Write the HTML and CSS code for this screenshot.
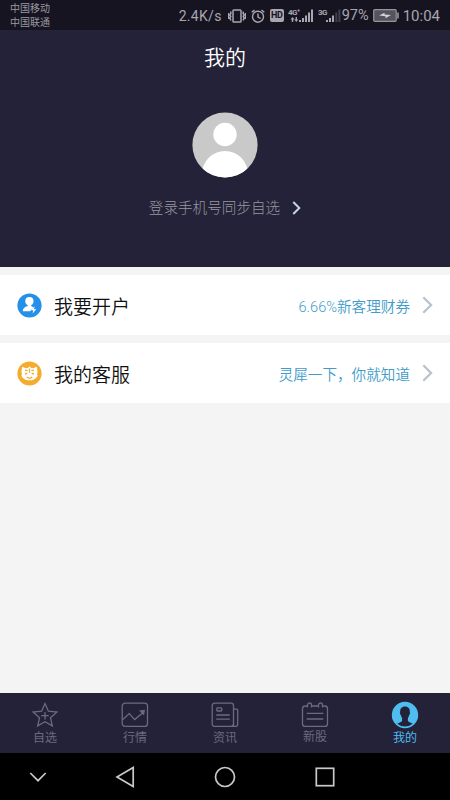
FILE: index.html
```html
<!DOCTYPE html>
<html lang="zh-CN">
<head>
<meta charset="utf-8">
<title>我的</title>
<link rel="stylesheet" href="styles.css">
</head>
<body>
<div class="screen">
  <div class="status">
    <div class="carriers"><span>中国移动</span><span>中国联通</span></div>
    <div class="indicators">
      <span class="speed">2.4K/s</span>
      <svg class="vibrate" width="18" height="14" viewBox="0 0 18 14" fill="none" stroke="currentColor" stroke-width="1.5"><rect x="5" y="1" width="8" height="12" rx=".8"/><path d="M2.8 2.5v2L2 6l.8 1.5L2 9l.8 2.5M.6 4v6M15.2 2.5v2L16 6l-.8 1.5L16 9l-.8 2.5M17.4 4v6"/></svg>
      <svg class="alarm" width="14" height="14" viewBox="0 0 14 14" fill="none" stroke="currentColor" stroke-width="1.4"><circle cx="7" cy="7.7" r="5.5"/><path d="M7 4.5v3.5l2.6 1.5M.7 3.3 3.5 1M13.3 3.3 10.5 1"/></svg>
      <span class="hd">HD</span>
      <svg class="signal-a" width="26" height="16" viewBox="0 0 26 16" fill="currentColor"><text x="0" y="7">4G⁺</text><path d="M4.5 9 6.5 11.5H5.2V14H3.8V11.5H2.5ZM8.3 14 6.3 11.5h1.3V9H9v2.5h1.3ZM11 12h2v2h-2zM14 10h2v4h-2zM17 7.5h2V14h-2zM20 4.5h2V14h-2zM23 1.5h2V14h-2z"/></svg>
      <svg class="signal-b" width="23" height="16" viewBox="0 0 23 16" fill="currentColor"><text x="0" y="7">3G</text><path d="M8 12h2v2H8zM11 10h2v4h-2zM14 7.5h2V14h-2z"/><path opacity=".3" d="M17.3 4.5h2V14h-2zM20.4 1.5h2V14h-2z"/></svg>
      <span class="percent">97%</span>
      <svg class="battery" width="26" height="13" viewBox="0 0 26 13"><rect x=".7" y=".7" width="22.5" height="11.6" rx="1" fill="#55535e" stroke="#96949c" stroke-width="1.2"/><path d="M24.3 3.5h1.4v6h-1.4z" fill="#aaa8af"/><path d="m6 6.5 5.5-2.7v1.8L18 6l-5.5 3.3V7.3Z" fill="#d4d2d8"/></svg>
      <span class="clock">10:04</span>
    </div>
  </div>

  <header class="profile">
    <h1>我的</h1>
    <svg class="avatar" width="66" height="66" viewBox="0 0 66 66"><defs><clipPath id="disc"><circle cx="33" cy="33" r="32.6"/></clipPath></defs><g clip-path="url(#disc)"><path fill="#c9c9c9" d="M0 0h66v66H0z"/><circle cx="33" cy="22.5" r="11.7" fill="#fff"/><ellipse cx="33" cy="62" rx="23" ry="23" fill="#fff"/></g></svg>
    <div class="login"><span>登录手机号同步自选</span><svg width="9" height="14" viewBox="0 0 9 14" fill="none" stroke="#c6d3e6" stroke-width="2"><path d="m1.3 1 6 6-6 6"/></svg></div>
  </header>

  <main>
    <a class="row">
      <svg width="25" height="25" viewBox="0 0 25 25"><circle cx="12.5" cy="12.5" r="12.1" fill="#2490ea"/><circle cx="12.4" cy="8.2" r="4.1" fill="#fff"/><path fill="#fff" d="M10.7 11h3.5v2l2.4 1.4-3.5 3.9H5.8c0-2.9 1.7-4.1 4.9-5.200Z"/><path fill="#fff" d="m17.700 13.300-3.700 4h2.200l-.6 3.200 3.700-4.200H17Z"/></svg>
      <span class="label">我要开户</span><span class="hint">6.66%新客理财券</span>
      <svg class="chevron" width="11" height="18" viewBox="0 0 11 18"><path d="m1.3 1.3 7.8 7.7-7.8 7.7"/></svg>
    </a>
    <a class="row">
      <svg width="25" height="25" viewBox="0 0 25 25"><circle cx="12.5" cy="12.5" r="12.1" fill="#f3ac2e"/><path fill="#fff" d="M5.200 5.700 9 7.200l2.200-.5 1.300-1.400 1.300 1.400 2.200.5 3.800-1.500.8 5.300-.6 2.200.7 1.500-1.400 2c-1.400 1.600-3.800 2.600-6.800 2.600s-5.400-1-6.800-2.600l-1.400-2 .7-1.500-.6-2.200Z"/><g fill="none" stroke="#f3ac2e" stroke-width="1.2"><path d="M8 9.300h2.600M14.400 9.300H17M12.500 7.500v4.200M8.800 13.800v-1.500h1.500M16.200 13.800v-1.500h-1.500M9.800 16c1.600 1.500 3.800 1.500 5.400 0"/></g></svg>
      <span class="label">我的客服</span><span class="hint">灵犀一下，你就知道</span>
      <svg class="chevron" width="11" height="18" viewBox="0 0 11 18"><path d="m1.3 1.3 7.8 7.7-7.8 7.7"/></svg>
    </a>
  </main>

  <nav class="tabs">
    <a><svg width="28" height="28" viewBox="0 0 28 28"><path d="m14 2.500 3.400 7.700 8.500.8-6.400 5.700 1.800 8.200-7.300-4.200-7.300 4.200 1.800-8.200L2.100 11l8.500-.8ZM14 11v7.500M10.300 14.700h7.400"/></svg><span>自选</span></a>
    <a><svg width="28" height="28" viewBox="0 0 28 28"><rect x="1.2" y="2.1" width="25.3" height="23.3" rx="3"/><path d="m1.500 18.800 6.800-6.200 5.400 6 9-7.600"/><path class="solid" d="m18 9.500 6-.8-1 5.800Z"/></svg><span>行情</span></a>
    <a><svg width="28" height="28" viewBox="0 0 28 28"><rect x="1.2" y="2.1" width="21.3" height="23.3" rx="2.5"/><path d="M22.500 8.200h3.200q1 0 1 1v13.700q0 2.500-2.500 2.500h-4q2.300 0 2.300-2.500M5.200 14h13.600M5.200 18.100h13.600"/><rect x="5.8" y="6.8" width="5" height="3.2" rx=".8"/></svg><span>资讯</span></a>
    <a class="stocks"><svg width="28" height="28" viewBox="0 0 28 28"><path d="M6.500 5H4.200q-2.700 0-2.700 2.700v15q0 2.700 2.700 2.700h19.600q2.700 0 2.700-2.700v-15Q26.500 5 23.800 5h-2.300M10.500 5h7M6.500 6.500V4a2 2 0 0 1 4 0v2.500M17.500 6.500V4a2 2 0 0 1 4 0v2.500M5.700 12.300h16.600M5.700 18h16.600"/></svg><span>新股</span></a>
    <a class="active"><svg width="28" height="28" viewBox="0 0 28 28"><circle class="blue" cx="14" cy="14" r="13.2"/><path class="bust" d="M14 5.500c3.300 0 5.100 2.200 4.800 5.700.6.400.3 2.200-.6 2.700-.3 1.400-.8 2.300-1.300 3v3c.9 1.200 3 1.700 4.800 2.900A12 12 0 0 1 14 25.600a12 12 0 0 1-7.700-2.800c1.800-1.200 3.900-1.700 4.800-2.900v-3c-.5-.7-1-1.600-1.300-3-.9-.5-1.200-2.300-.6-2.700-.3-3.500 1.500-5.700 4.800-5.700Z"/></svg><span>我的</span></a>
  </nav>

  <div class="system">
    <svg viewBox="0 0 24 24"><path d="m4.300 8 7.700 7.700L19.700 8"/></svg>
    <svg viewBox="0 0 24 24"><path d="M20.200 2.500v19L4 12Z"/></svg>
    <svg viewBox="0 0 24 24"><circle cx="12" cy="12" r="9.500"/></svg>
    <svg viewBox="0 0 24 24"><rect x="3.3" y="3.3" width="17.4" height="17.4"/></svg>
  </div>
</div>
</body>
</html>
```
FILE: styles.css
```css
* { box-sizing: border-box; }
body { margin: 0; font-family: Roboto, "Noto Sans CJK SC", sans-serif; background: #f4f4f4; }
svg { display: block; flex: none; }
.screen { width: 450px; height: 800px; display: flex; flex-direction: column; background: #f4f4f4; overflow: hidden; }
.status { height: 30px; flex: none; background: #161421; color: #a8a6ae; display: flex; justify-content: space-between; padding: 0 10px; }
.carriers { display: flex; flex-direction: column; padding-top: 2px; font-size: 10px; line-height: 14px; color: #9a98a1; }
.indicators { display: flex; align-items: center; white-space: nowrap; padding-top: 1px; }
.speed { font-size: 14px; letter-spacing: .3px; }
.vibrate { margin-left: 6px; }
.alarm { margin-left: 5px; }
.hd { margin-left: 5px; width: 14px; height: 13px; border-radius: 2px; background: #a8a6ae; color: #161421; font-size: 9px; font-weight: 700; line-height: 13px; display: flex; justify-content: center; letter-spacing: -.3px; }
.signal-a, .signal-b { margin-left: 4px; }
.indicators text { font-size: 8px; font-weight: 700; letter-spacing: -.5px; }
.percent { margin-left: 1px; font-size: 14.5px; }
.battery { margin-left: 4px; }
.clock { margin-left: 4px; font-size: 15px; }
.profile { height: 237px; flex: none; background: #242238; display: flex; flex-direction: column; align-items: center; }
.profile h1 { margin: 12px 0 0; font-size: 21px; line-height: 32px; font-weight: 350; color: #fff; }
.avatar { margin-top: 38px; }
.login { display: flex; align-items: center; gap: 12px; margin-top: 20px; font-size: 14.6px; line-height: 20px; color: #9795a1; font-weight: 300; }
main { flex: 1; padding-top: 8px; display: flex; flex-direction: column; gap: 8px; }
.row { height: 60px; background: #fff; display: flex; align-items: center; padding: 0 17px; }
.label { margin-left: 12px; font-size: 19px; font-weight: 350; color: #111; }
.hint { margin-left: auto; font-size: 14.6px; font-weight: 350; color: #419bc9; }
.chevron { margin-left: 12px; fill: none; stroke: #b9c3cd; stroke-width: 2.3; }
.tabs { height: 60px; flex: none; background: #242238; display: grid; grid-template-columns: repeat(5, 1fr); }
.tabs a { display: flex; flex-direction: column; align-items: center; padding-top: 8px; font-size: 12px; line-height: 16px; color: #6c6981; }
.tabs svg { fill: none; stroke: #6c6981; stroke-width: 1.3; }
.tabs span { margin-top: 1px; }
.tabs .solid { fill: #6c6981; stroke: none; }
.tabs .stocks span { margin-top: 0; }
.tabs .active { color: #4fbdf0; }
.tabs .blue { fill: #4fbdf0; stroke: none; }
.tabs .bust { fill: #242238; stroke: none; }
.system { height: 47px; flex: none; background: #000; display: grid; grid-template-columns: 75px 100px 100px 100px; align-items: center; justify-items: center; }
.system svg { width: 24px; height: 24px; fill: none; stroke: #c9c9c9; stroke-width: 1.7; }
```
